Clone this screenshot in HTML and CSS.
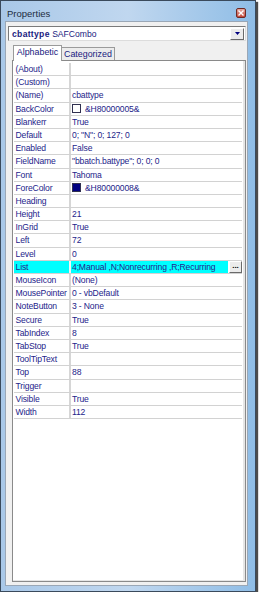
FILE: index.html
```html
<!DOCTYPE html>
<html lang="en">
<head>
  <meta charset="UTF-8">
  <title>Properties</title>
  <link rel="stylesheet" href="styles.css">
</head>
<body>
  <div class="window">
    <div class="titlebar">
      <span class="title">Properties</span>
      <span class="close">
        <svg width="8" height="8" viewBox="0 0 8 8"><path d="M1.5 1.5 L6.5 6.5 M6.5 1.5 L1.5 6.5" stroke="#fff" stroke-width="1.4"/></svg>
      </span>
    </div>
    <div class="client">
      <div class="combo">
        <span class="combo-text"><b>cbattype</b> SAFCombo</span>
        <span class="combo-btn">
          <svg width="5" height="3" viewBox="0 0 5 3"><path d="M0 0 H5 L2.5 3 Z" fill="#000080"/></svg>
        </span>
      </div>
      <div class="tabs">
        <span class="tab active">Alphabetic</span>
        <span class="tab">Categorized</span>
      </div>
      <div class="page">
        <div class="row"><span class="name">(About)</span><span class="value"></span></div>
        <div class="row"><span class="name">(Custom)</span><span class="value"></span></div>
        <div class="row"><span class="name">(Name)</span><span class="value">cbattype</span></div>
        <div class="row"><span class="name">BackColor</span><span class="value"><i class="swatch white"></i>&amp;H80000005&amp;</span></div>
        <div class="row"><span class="name">Blankerr</span><span class="value">True</span></div>
        <div class="row"><span class="name">Default</span><span class="value">0; "N"; 0; 127; 0</span></div>
        <div class="row"><span class="name">Enabled</span><span class="value">False</span></div>
        <div class="row"><span class="name">FieldName</span><span class="value">"bbatch.battype"; 0; 0; 0</span></div>
        <div class="row"><span class="name">Font</span><span class="value">Tahoma</span></div>
        <div class="row"><span class="name">ForeColor</span><span class="value"><i class="swatch navy"></i>&amp;H80000008&amp;</span></div>
        <div class="row"><span class="name">Heading</span><span class="value"></span></div>
        <div class="row"><span class="name">Height</span><span class="value">21</span></div>
        <div class="row"><span class="name">InGrid</span><span class="value">True</span></div>
        <div class="row"><span class="name">Left</span><span class="value">72</span></div>
        <div class="row"><span class="name">Level</span><span class="value">0</span></div>
        <div class="row selected"><span class="name">List</span><span class="value"><span class="clip">4;Manual ,N;Nonrecurring ,R;Recurring</span><span class="dots">...</span></span></div>
        <div class="row"><span class="name">MouseIcon</span><span class="value">(None)</span></div>
        <div class="row"><span class="name">MousePointer</span><span class="value">0 - vbDefault</span></div>
        <div class="row"><span class="name">NoteButton</span><span class="value">3 - None</span></div>
        <div class="row"><span class="name">Secure</span><span class="value">True</span></div>
        <div class="row"><span class="name">TabIndex</span><span class="value">8</span></div>
        <div class="row"><span class="name">TabStop</span><span class="value">True</span></div>
        <div class="row"><span class="name">ToolTipText</span><span class="value"></span></div>
        <div class="row"><span class="name">Top</span><span class="value">88</span></div>
        <div class="row"><span class="name">Trigger</span><span class="value"></span></div>
        <div class="row"><span class="name">Visible</span><span class="value">True</span></div>
        <div class="row"><span class="name">Width</span><span class="value">112</span></div>
      </div>
    </div>
  </div>
</body>
</html>
```
FILE: styles.css
```css
* {
  box-sizing: border-box;
}

body {
  margin: 0;
  background: #fff;
  font-family: "Liberation Sans", Arial, sans-serif;
}

.window {
  width: 256px;
  height: 592px;
  border: 1px solid #3a4a5c;
  background: linear-gradient(to right, #a9c8e8, #c0d7ef 50%, #8fbde6);
  box-shadow: 2px 2px 1px rgba(0, 0, 0, 0.7);
  display: flex;
  flex-direction: column;
  padding: 0 7px 5px 4px;
}

.titlebar {
  height: 20px;
  display: flex;
  justify-content: space-between;
  align-items: flex-start;
  padding-top: 7px;
}

.title {
  margin: 1px 0 0 2px;
  font-size: 9.5px;
  line-height: 10px;
  color: #1e2d40;
}

.close {
  width: 10px;
  height: 10px;
  margin-right: 2px;
  border: 1px solid #6e2a24;
  border-radius: 2px;
  background: linear-gradient(#e5a79e, #c3473a);
  display: flex;
  align-items: center;
  justify-content: center;
}

.client {
  flex: 1;
  background: #f0f0f0;
  border: 1px solid #9aa7b6;
  display: flex;
  flex-direction: column;
}

.combo {
  width: 238px;
  height: 15px;
  margin: 4px 0 0 2px;
  background: #fff;
  border: 1px solid #7a7a7a;
  border-right-color: #dcdcdc;
  border-bottom-color: #dcdcdc;
  display: flex;
  align-items: center;
  justify-content: space-between;
  font-size: 8.6px;
  color: #1a1a80;
}

.combo-text {
  padding-left: 3px;
}

.combo-text b {
  letter-spacing: 0.3px;
}

.combo-btn {
  width: 14px;
  height: 12px;
  margin-right: 1px;
  background: #ececec;
  border: 1px solid #fff;
  border-right-color: #6a6a6a;
  border-bottom-color: #6a6a6a;
  display: flex;
  align-items: center;
  justify-content: center;
}

.tabs {
  display: flex;
  align-items: flex-end;
  height: 15px;
  margin: 4px 0 0 6px;
  padding-left: 1px;
  position: relative;
  z-index: 1;
}

.tab {
  height: 13px;
  padding: 0 2px;
  border: 1px solid #9a9a9a;
  border-bottom: none;
  border-left: none;
  background: #ececec;
  font-size: 8.9px;
  line-height: 12px;
  color: #1a1a80;
}

.tab.active {
  width: 49px;
  height: 16px;
  margin-bottom: -1px;
  border-left: 1px solid #9a9a9a;
  background: #fff;
  line-height: 13px;
  text-align: center;
}

.page {
  width: 234px;
  height: 522px;
  margin-left: 6px;
  background: #fff;
  border: 1px solid #8a8a8a;
  box-shadow: inset -2px -1px 0 #e6e6e6;
  padding: 2px 3px 0 1px;
}

.row {
  display: grid;
  grid-template-columns: 57px 1fr;
  height: 13.2px;
  border-bottom: 1px solid #d2d2d2;
  font-size: 8.6px;
  line-height: 12.2px;
  letter-spacing: -0.15px;
  color: #24248a;
  white-space: nowrap;
}

.name {
  padding-left: 1.5px;
  border-right: 2px solid #d6d6d6;
  overflow: hidden;
}

.value {
  padding-left: 1px;
  display: flex;
  align-items: center;
  overflow: hidden;
}

.swatch {
  display: inline-block;
  width: 9px;
  height: 9px;
  margin-right: 4px;
  border: 1px solid #303050;
}

.swatch.white { background: #fff; }
.swatch.navy { background: #000080; }

.selected .name {
  background: #00ffff;
  border-right-color: #f4f4f4;
}

.selected .value {
  padding-left: 0;
}

.clip {
  flex: 1;
  height: 100%;
  overflow: hidden;
  background: #00ffff;
  padding-left: 1px;
}

.dots {
  width: 13px;
  height: 12px;
  margin-left: 1px;
  background: #ececec;
  border: 1px solid #fff;
  border-right-color: #6a6a6a;
  border-bottom-color: #6a6a6a;
  font-size: 8px;
  line-height: 8px;
  font-weight: bold;
  letter-spacing: 0;
  text-align: center;
  color: #000;
}
```
